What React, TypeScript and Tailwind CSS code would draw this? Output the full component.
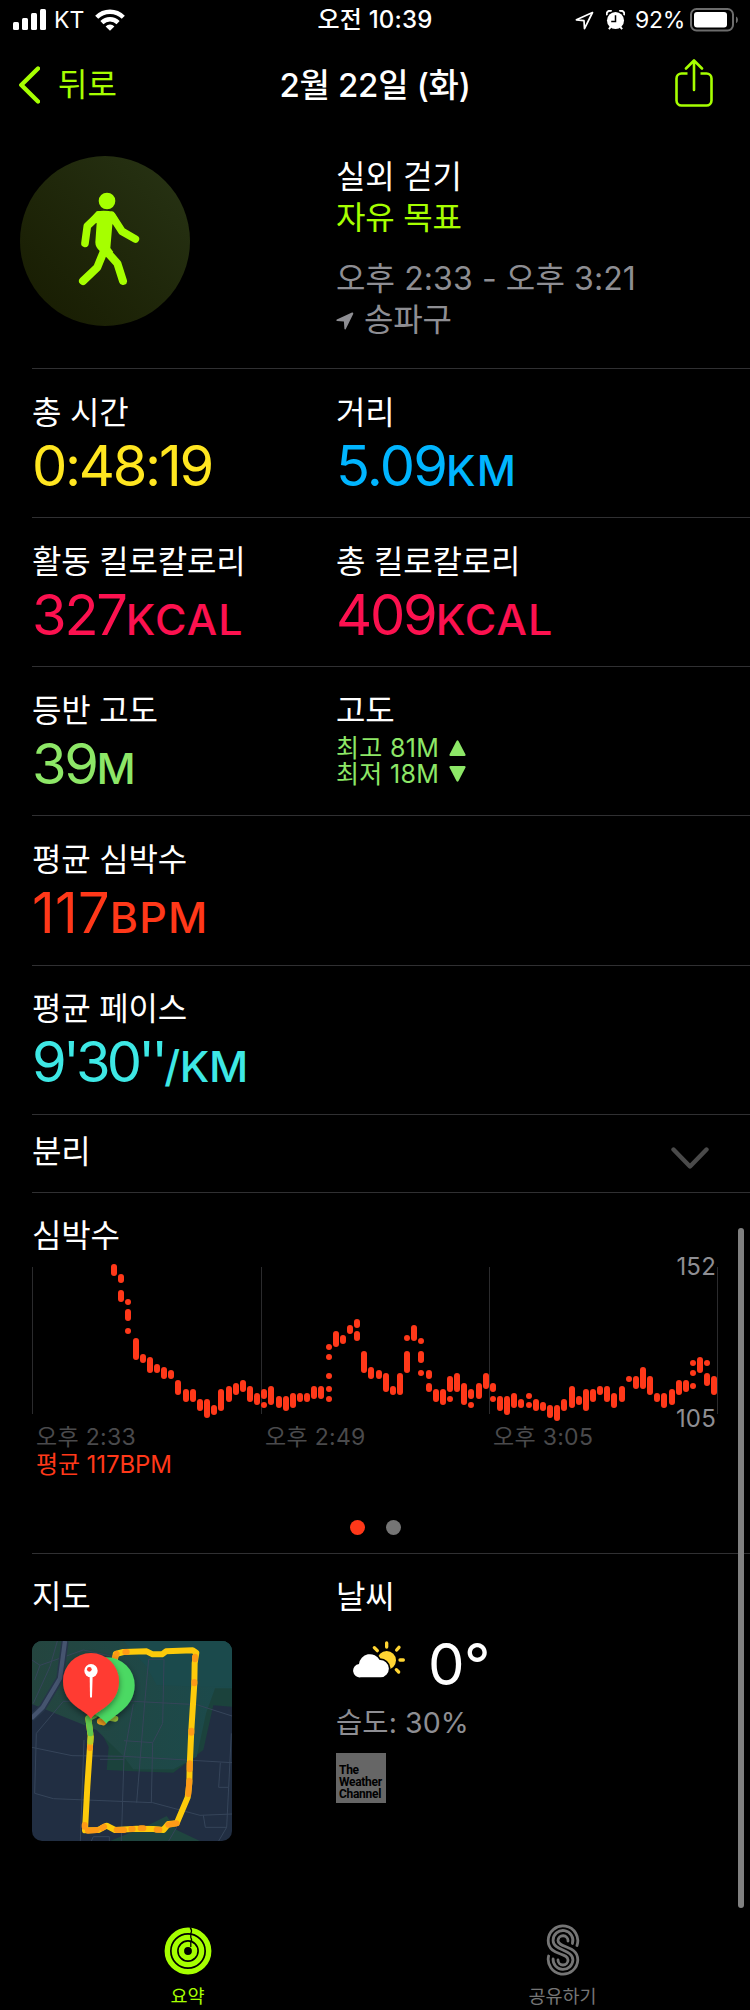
import type { ReactNode } from "react";

type Beat = [x: number, top: number, bottom: number];

// Heart rate ranges: x position, highest and lowest point of every sample
const BEATS: Beat[] = [
  [82, 4, 16], [89, 14, 23], [89, 30, 42], [96, 39, 45], [96, 49, 61], [96, 68, 74],
  [104, 78, 100], [111, 94, 103], [118, 97, 113], [125, 104, 113], [132, 107, 119],
  [139, 110, 119], [146, 120, 135], [154, 129, 142], [161, 129, 142], [168, 139, 151],
  [175, 139, 158], [182, 145, 155], [189, 129, 151], [197, 126, 142], [204, 123, 135],
  [211, 120, 132], [218, 126, 142], [225, 133, 145], [232, 129, 139], [232, 142, 148],
  [239, 126, 145], [247, 136, 148], [254, 136, 151], [261, 133, 148], [268, 133, 142],
  [275, 133, 142], [282, 126, 139], [289, 126, 139], [297, 84, 90], [297, 94, 100],
  [297, 113, 119], [297, 126, 132], [297, 136, 142], [304, 71, 87], [311, 75, 84],
  [318, 65, 74], [325, 59, 68], [325, 71, 81], [332, 91, 113], [339, 107, 119],
  [347, 110, 119], [354, 113, 132], [361, 126, 135], [368, 113, 135], [375, 75, 81],
  [375, 91, 113], [382, 65, 81], [389, 78, 84], [389, 91, 103], [389, 110, 116],
  [397, 110, 119], [397, 123, 132], [404, 129, 142], [411, 129, 145], [418, 116, 132],
  [418, 136, 142], [425, 113, 132], [432, 123, 145], [439, 129, 139], [439, 142, 148],
  [447, 123, 139], [454, 113, 129], [461, 123, 132], [461, 136, 142], [468, 136, 151],
  [475, 136, 155], [482, 133, 148], [489, 139, 148], [497, 133, 139], [497, 142, 148],
  [504, 139, 151], [511, 142, 151], [518, 145, 158], [525, 145, 161], [532, 139, 151],
  [540, 126, 148], [547, 136, 145], [554, 129, 151], [561, 129, 142], [568, 126, 135],
  [575, 126, 142], [582, 133, 148], [590, 126, 142], [597, 116, 122], [604, 116, 129],
  [611, 107, 129], [618, 116, 135], [625, 133, 142], [632, 133, 148], [640, 129, 145],
  [647, 120, 135], [654, 120, 132], [661, 100, 106], [661, 110, 116], [661, 123, 129],
  [668, 97, 113], [675, 100, 106], [675, 113, 126], [682, 116, 135],
];

const Label = ({ children }: { children: ReactNode }) => (
  <div className="text-[32px] leading-10 tracking-[-0.2px] text-white whitespace-nowrap">{children}</div>
);

type ValueProps = { number: string; unit?: string; className: string; unitClassName?: string };

const Value = ({ number, unit, className, unitClassName = "tracking-[1.1px]" }: ValueProps) => (
  <div className={`mt-[3px] text-[56px] leading-[60px] whitespace-nowrap ${className}`}>
    {number}
    {unit && <span className={`text-[43px] font-medium ${unitClassName}`}>{unit}</span>}
  </div>
);

const Row = ({ left, right, className = "h-[149px] pt-6" }: { left: ReactNode; right?: ReactNode; className?: string }) => (
  <div className={`flex border-t border-[#303032] ${className}`}>
    <div className="w-[304px]">{left}</div>
    {right && <div>{right}</div>}
  </div>
);

const StatusBar = () => (
  <div className="grid h-10 grid-cols-3 items-center pl-[13px] pr-[11px] text-[23px] leading-10 text-white">
    <div className="flex items-center">
      <svg width="33" height="22" viewBox="0 0 33 22" fill="#fff">
        <rect x="0" y="13" width="6" height="8" rx="1.5" />
        <rect x="9" y="9" width="6" height="12" rx="1.5" />
        <rect x="18" y="4" width="6" height="17" rx="1.5" />
        <rect x="27" y="0" width="6" height="21" rx="1.5" />
      </svg>
      <span className="ml-[8px]">KT</span>
      <svg className="ml-[11px]" width="30" height="22" viewBox="0 0 30 22" fill="none" stroke="#fff" strokeWidth="4.4">
        <path d="M1.7 8.2a19 19 0 0 1 26.6 0" />
        <path d="M6.9 13.6a11.6 11.6 0 0 1 16.2 0" />
        <path d="M15 21.8l-4.4-4.4a6.3 6.3 0 0 1 8.8 0z" fill="#fff" stroke="none" />
      </svg>
    </div>
    <div className="-ml-[2px] text-center text-[24px] font-medium tracking-[0.2px]">오전 10:39</div>
    <div className="flex items-center justify-end">
      <svg width="19" height="19" viewBox="0 0 19 19" fill="none" stroke="#fff" strokeWidth="1.7" strokeLinejoin="round">
        <path d="M17.5 1.5 1.4 8.8l7.6.9.5 8z" />
      </svg>
      <svg className="ml-[12px]" width="19" height="21" viewBox="0 0 20 22">
        <circle cx="10" cy="11" r="9" fill="#fff" />
        <path d="M1 5.5A3.5 3.5 0 0 1 6 1.2M19 5.5A3.5 3.5 0 0 0 14 1.2M3 20l2-2.4M17 20l-2-2.4" stroke="#fff" strokeWidth="2" fill="none" />
        <path d="M10 5.5V12H5.5" stroke="#000" strokeWidth="1.6" fill="none" />
      </svg>
      <span className="ml-[10px] tracking-[-0.3px]">92%</span>
      <svg className="ml-[5px]" width="49" height="24" viewBox="0 0 49 24">
        <rect x="1" y="1" width="42" height="21.5" rx="5.5" fill="none" stroke="#6c6c6c" strokeWidth="2" />
        <rect x="4" y="4" width="33" height="15.5" rx="3" fill="#fff" />
        <path d="M46 8.4q2 1 2 3.4t-2 3.4z" fill="#6c6c6c" />
      </svg>
    </div>
  </div>
);

const NavBar = () => (
  <div className="grid h-[90px] grid-cols-3 items-center pl-[18px] pr-[37px]">
    <div className="flex items-center text-[32px] leading-10 text-[#a6ff00]">
      <svg width="22" height="38" viewBox="0 0 22 38" fill="none" stroke="#a6ff00" strokeWidth="4.4" strokeLinecap="round" strokeLinejoin="round">
        <path d="M20 2.5 3.3 19 20 35.500" />
      </svg>
      <span className="ml-[18px]">뒤로</span>
    </div>
    <div className="ml-[19px] text-center text-[33px] font-medium leading-10 tracking-[-0.3px] whitespace-nowrap text-white">2월 22일 (화)</div>
    <svg className="ml-auto -mt-[4px]" width="38" height="48" viewBox="0 0 38 48" fill="none" stroke="#a6ff00" strokeWidth="2.6">
      <path d="M12.5 14.5H6.5a5 5 0 0 0-5 5v22a5 5 0 0 0 5 5h25a5 5 0 0 0 5-5v-22a5 5 0 0 0-5-5h-6" />
      <path d="M19 31V2M11 9.5l8-8 8 8" strokeLinecap="round" strokeLinejoin="round" />
    </svg>
  </div>
);

const Hero = () => (
  <div className="flex h-[238px] pl-5">
    <div className="mt-[26px] flex h-[170px] w-[170px] items-center justify-center rounded-full bg-linear-to-tr from-[#171b02] to-[#283415]">
      <svg width="170" height="170" viewBox="60 48 510 510" fill="none" stroke="#a6ff00" strokeLinecap="round" strokeLinejoin="round">
        <circle cx="321" cy="183" r="25" fill="#a6ff00" stroke="none" />
        <path d="M290 214Q320 210 341 217L352 233 337 254 331 324 340 336 319 352 300 334Q286 322 286 307L290 250 270 236z" fill="#a6ff00" stroke="none" />
        <path d="M297 225 262 258 255 310" strokeWidth="23" />
        <path d="M335 226 366 274 406 297" strokeWidth="23" />
        <path d="M311 335 292 382 249 423" strokeWidth="24" />
        <path d="M323 338 352 370 369 423" strokeWidth="24" />
      </svg>
    </div>
    <div className="ml-[146px] pt-[26px] text-[32px] leading-[41px] tracking-[-0.2px] text-[#8e8e93]">
      <div className="text-white">실외 걷기</div>
      <div className="text-[#a6ff00]">자유 목표</div>
      <div className="mt-[20px] tracking-[0.1px] whitespace-nowrap">오후 2:33 - 오후 3:21</div>
      <div className="flex items-center">
        <svg className="mt-[2px]" width="18" height="18" viewBox="0 0 18 18" fill="#8e8e93">
          <path d="M16 .6.8 7.5q-1.2.9.2 1.4l6.9.7.5 7.2q.5 1.5 1.4.2L17.200 2q.3-1.7-1.200-1.4z" />
        </svg>
        <span className="ml-[10px]">송파구</span>
      </div>
    </div>
  </div>
);

const HeartRate = () => (
  <div className="h-[361px] border-t border-[#303032] pt-[23px]">
    <Label>심박수</Label>
    <div className="relative mt-[4px] h-[163px] w-[687px]">
      <svg width="687" height="165" viewBox="0 0 687 165">
        {[0, 229, 457, 685].map((x) => (
          <rect key={x} x={x} y="7" width="1" height="147" fill="#2b2b2d" />
        ))}
        {BEATS.map(([x, top, bottom]) => (
          <rect key={`${x}-${top}`} x={x - 3} y={top} width="6" height={bottom - top} rx="3" fill="#ff3819" />
        ))}
      </svg>
      <div className="absolute right-[3px] top-[-8px] text-[24px] leading-[30px] tracking-[0.2px] text-[#8e8e93]">152</div>
      <div className="absolute right-[3px] top-[144px] text-[24px] leading-[30px] tracking-[0.2px] text-[#8e8e93]">105</div>
    </div>
    <div className="flex pl-[4px] text-[23px] leading-[28px] tracking-[0.3px] text-[#4a4a4c]">
      <div className="w-[229px]">오후 2:33</div>
      <div className="w-[228px]">오후 2:49</div>
      <div>오후 3:05</div>
    </div>
    <div className="pl-[4px] text-[24px] leading-[28px] tracking-[-0.1px] text-[#ff3819]">평균 117BPM</div>
    <div className="mt-[41px] flex gap-[21px] pl-[318px]">
      <div className="h-[15px] w-[15px] rounded-full bg-[#ff3819]" />
      <div className="h-[15px] w-[15px] rounded-full bg-[#757575]" />
    </div>
  </div>
);

const RouteMap = () => (
  <svg className="rounded-[10px]" width="200" height="200" viewBox="96 423 600 600" fill="none">
    <defs>
      <linearGradient id="park" x1="0" y1="0" x2="1" y2="0">
        <stop offset="0" stopColor="#24453f" />
        <stop offset="1" stopColor="#1b4a4c" />
      </linearGradient>
      <filter id="shade" x="-40%" y="-40%" width="180%" height="180%">
        <feDropShadow dx="0" dy="8" stdDeviation="10" floodColor="#000" floodOpacity="0.45" />
      </filter>
    </defs>
    <rect x="96" y="423" width="600" height="600" fill="#212e42" />
    <path d="M96 423H696V620L640 616 610 750 520 818 400 814 320 810 326 740 300 690 250 668 96 612z" fill="#1b423c" />
    <path d="M96 423H696V565H645L618 640 590 770 520 808H400L370 768 290 690 96 612z" fill="url(#park)" />
    <path d="M370 423H696V560H600L470 555 440 500z" fill="#1b4a4c" />
    <path d="M330 1023 440 978 500 948 530 990 600 1023z" fill="#1f453f" />
    <g stroke="#36455a" strokeWidth="3">
      <path d="M96 742 216 767 372 769 696 788M104 880 160 896 458 908 600 946 696 942M104 880 109 700 190 604" />
      <path d="M190 604 400 604 590 614 696 648M372 722 458 728 488 670 492 478H446L434 610 410 908M372 778H300M400 612 372 770 364 1023M458 728 454 908" />
      <path d="M661 788 656 862H686M694 700 686 862 680 982 656 1023M610 946 616 982H680M252 720 241 1023M274 1023 280 1010H328V1023M530 982 506 1023" />
      <path d="M96 480 120 496 104 540M120 496 250 450 340 470M172 423 150 500 100 610" />
    </g>
    <path d="M195 423 180 535 128 622 94 655" stroke="#26354a" strokeWidth="22" />
    <path d="M195 423 180 535 128 622 94 655" stroke="#45546f" strokeWidth="13" />
    <g strokeWidth="18" strokeLinecap="round" strokeLinejoin="round">
      <path d="M345 480 347 462 370 456 440 454 458 463 486 463 498 454 578 451 589 458 584 490 583 550 574 690 569 800 568 850 563 892 530 970 505 972 490 990 460 987 410 986 345 990 320 977 295 990 255 991 262 860 270 740 272 710 265 655" stroke="#fdca0a" />
      <path d="M345 472 350 462M376 456H380M585 470V478M583 546V550M574 692V698M569 790V808M568 842 565 882M530 970 505 974M478 989H470M430 985H422M398 987H394M372 990H350M312 980 306 984M290 990 264 992M254 980V975M270 740V744" stroke="#fd9a17" />
      <path d="M271 725 272 712" stroke="#b5cf28" />
      <path d="M271 700 265 655 285 645" stroke="#62c84c" />
      <path d="M300 664 320 652 346 656" stroke="#9cc63a" />
      <path d="M300 664 310 667" stroke="#f2a01e" />
    </g>
    <path d="M319 671C306 646 236 632 236 556a84 84 0 0 1 168 0C404 624 338 646 319 671z" fill="#4cd964" filter="url(#shade)" />
    <path d="M273 657C262 630 189 618 189 543a84 84 0 0 1 168 0C357 618 286 630 273 657z" fill="#ff3b30" filter="url(#shade)" />
    <path d="M269 525H278L276 591Q273 596 270 591z" fill="#fff" />
    <circle cx="273" cy="512" r="20" fill="#fff" />
    <circle cx="268" cy="508" r="7" fill="#ff3b30" />
  </svg>
);

const WeatherIcon = () => (
  <svg width="52" height="38" viewBox="159 419 156 114" fill="none">
    <circle cx="260" cy="477" r="28" fill="#ffd533" />
    <path d="M260 425V437M297 438 290 446M310 476H300M296 512 289 505M223 439 232 448" stroke="#ffd533" strokeWidth="10" strokeLinecap="round" />
    <path d="M182 528a20 20 0 0 1-5-40 33 33 0 0 1 62-12 26 26 0 0 1 3 52z" fill="#fff" stroke="#000" strokeWidth="10" paintOrder="stroke" />
  </svg>
);

const Weather = () => (
  <div>
    <Label>날씨</Label>
    <div className="mt-[24px] flex h-[60px] pl-[17px]">
      <WeatherIcon />
      <div className="ml-[23px] -mt-[7px] text-[58px] leading-[60px] tracking-[-0.5px] text-white">0°</div>
    </div>
    <div className="mt-[2px] text-[28.5px] leading-10 tracking-[0.1px] text-[#8e8e93]">습도: 30%</div>
    <div className="mt-[10px] h-[50px] w-[50px] bg-[#666] pl-[3px] pt-[11px] font-['Roboto'] text-[12px] font-bold leading-[12px] tracking-[-0.3px] text-black">
      <div>The</div>
      <div>Weather</div>
      <div>Channel</div>
    </div>
  </div>
);

const TabBar = () => (
  <div className="grid grid-cols-2 text-center text-[18.5px] leading-6">
    <div className="flex flex-col items-center text-[#a6ff00]">
      <svg width="48" height="54" viewBox="0 0 48 54" fill="none" stroke="#a6ff00" strokeWidth="5.4">
        <circle cx="24" cy="28" r="20.7" />
        <circle cx="24" cy="28" r="13.6" />
        <circle cx="24" cy="28" r="6.6" />
        <path d="M26.2 4.5q2.3 3 .6 6v4q1.6 2.5 0 4.5v5" stroke="#000" strokeWidth="1.3" />
      </svg>
      <div className="mt-[7px]">요약</div>
    </div>
    <div className="flex flex-col items-center text-[#757575]">
      <svg width="34" height="54" viewBox="0 0 34 54" fill="none" stroke="#757575" strokeWidth="2.8" strokeLinecap="round">
        <path d="M31 22.5A14.8 14.8 0 1 0 2.2 17.5C2.2 33 22 29 22 37A5 5 0 0 1 12 37" />
        <path d="M26.4 20.5A9.9 9.9 0 1 0 7.1 17.5C7.1 28 26.9 26 26.9 37A9.9 9.9 0 0 1 7.1 36" />
        <path d="M22 18A5 5 0 1 0 12 17.5C12 25 31.8 22 31.8 37A14.8 14.8 0 1 1 2.6 33" />
      </svg>
      <div className="mt-[7px]">공유하기</div>
    </div>
  </div>
);

export default function App() {
  return (
    <div className="relative h-[2010px] w-[750px] overflow-hidden bg-black font-['Inter','Noto_Sans_CJK_KR',sans-serif]">
      <StatusBar />
      <NavBar />
      <Hero />
      <div className="pl-8">
        <Row
          left={<><Label>총 시간</Label><Value number="0:48:19" className="text-[#ffe620] tracking-[-2.3px]" /></>}
          right={<><Label>거리</Label><Value number="5.09" unit="KM" className="text-[#00b5ff] tracking-[-1.8px]" /></>}
        />
        <Row
          left={<><Label>활동 킬로칼로리</Label><Value number="327" unit="KCAL" className="text-[#fc114f] tracking-[-2.2px]" /></>}
          right={<><Label>총 킬로칼로리</Label><Value number="409" unit="KCAL" className="text-[#fc114f] tracking-[-2.2px]" /></>}
        />
        <Row
          left={<><Label>등반 고도</Label><Value number="39" unit="M" className="text-[#8de767] tracking-[-2.4px]" /></>}
          right={
            <>
              <Label>고도</Label>
              <div className="mt-[4px] text-[25px] leading-[26px] tracking-[0.3px] text-[#8de767]">
                <div className="flex items-center gap-[10px]">
                  최고 81M
                  <svg width="17" height="16" viewBox="0 0 17 16" fill="#8de767"><path d="M7.5 1q1-1.5 2 0l7 13.5q.3 1.5-1 1.5h-14q-1.3 0-1-1.5z" /></svg>
                </div>
                <div className="flex items-center gap-[10px]">
                  최저 18M
                  <svg width="17" height="16" viewBox="0 0 17 16" fill="#8de767"><path d="M7.5 15q1 1.5 2 0l7-13.5q.3-1.5-1-1.5h-14q-1.3 0-1 1.5z" /></svg>
                </div>
              </div>
            </>
          }
        />
        <Row className="h-[150px] pt-6" left={<><Label>평균 심박수</Label><Value number="117" unit="BPM" className="text-[#ff3819] tracking-[0.2px]" /></>} />
        <Row
          className="h-[149px] pt-[23px]"
          left={
            <>
              <Label>평균 페이스</Label>
              <Value number="9'30''" unit="/KM" className="text-[#3ee8e5] tracking-[-3.8px]" unitClassName="tracking-[-0.3px]" />
            </>
          }
        />
        <div className="flex h-[78px] justify-between border-t border-[#303032] pr-[41px] pt-[17px]">
          <Label>분리</Label>
          <svg className="mt-[14px]" width="38" height="24" viewBox="0 0 38 24" fill="none" stroke="#4a4a4a" strokeWidth="4.4" strokeLinecap="round" strokeLinejoin="round">
            <path d="M2.5 3.5 19 20.5 35.5 3.5" />
          </svg>
        </div>
        <HeartRate />
        <div className="flex h-[370px] border-t border-[#303032] pt-[23px]">
          <div className="w-[304px]">
            <Label>지도</Label>
            <div className="mt-[24px]"><RouteMap /></div>
          </div>
          <Weather />
        </div>
      </div>
      <TabBar />
      <div className="absolute right-[6px] top-[1228px] h-[680px] w-[6px] rounded-full bg-[#808080]" />
    </div>
  );
}
